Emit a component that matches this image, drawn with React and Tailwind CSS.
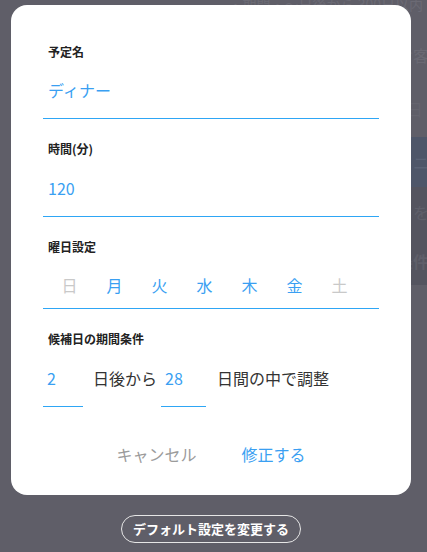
import React from "react";

const days = [
  { d: "日", on: false },
  { d: "月", on: true },
  { d: "火", on: true },
  { d: "水", on: true },
  { d: "木", on: true },
  { d: "金", on: true },
  { d: "土", on: false },
];

const font = { fontFamily: '"Noto Sans CJK JP", "Noto Sans", sans-serif' };

const Label = ({ children, className = "" }) => (
  <div className={"h-4 pl-[5px] text-[12px] font-bold leading-4 text-[#222] " + className}>{children}</div>
);

const App = () => {
  return (
    <div style={font} className="relative h-[552px] w-[427px] overflow-hidden bg-[#5f5e68]">
      {/* dimmed page behind the modal */}
      <div className="flex flex-col items-end">
        <div className="h-[30px] pr-1 text-[14px] leading-[8px] text-[#6b6a74]">
          ・期間・〜日後から 300日以内
        </div>
        <div className="flex h-[50px] w-[30px] items-center text-[16px] text-[#6a6973]">
          <span className="whitespace-nowrap">お客</span>
        </div>
        <div className="flex h-[57px] w-[30px] items-center text-[16px] text-[#65646e]">
          <span className="-ml-2 whitespace-nowrap">10日</span>
        </div>
        <div className="flex h-[50px] w-[30px] items-center bg-[#4e5669] text-[16px] text-[#5a6275]">
          <span className="whitespace-nowrap">ミニ</span>
        </div>
        <div className="flex h-[50px] w-[30px] items-center bg-[#54545f] text-[16px] text-[#5f5f6a]">
          <span className="whitespace-nowrap">日を</span>
        </div>
        <div className="flex h-[48px] w-[30px] items-center bg-[#54545f] text-[16px] font-bold text-[#5f5f6a]">
          <span className="whitespace-nowrap">条件</span>
        </div>
      </div>

      {/* modal */}
      <div className="absolute inset-0 flex flex-col items-start pl-[11px] pt-[5px]">
        <div className="flex h-[490px] w-[400px] flex-col rounded-[16px] bg-white px-[32px] pt-[39px]">
          <Label>予定名</Label>
          <div className="border-b border-[#2ea6f5] pb-[16px] pl-[5px] pt-[18px] text-[16px] leading-6 text-[#3a9ff2]">
            ディナー
          </div>

          <Label className="mt-[22px]">時間(分)</Label>
          <div className="border-b border-[#2ea6f5] pb-[16px] pl-[5px] pt-[19px] text-[16px] leading-6 text-[#3a9ff2]">
            120
          </div>

          <Label className="mt-[22px]">曜日設定</Label>
          <div className="flex border-b border-[#2ea6f5] pb-[11px] pl-[4px] pt-[18px] text-[16px] leading-6">
            {days.map((x) => (
              <div
                key={x.d}
                className={"w-[45px] text-center " + (x.on ? "text-[#3a9ff2]" : "text-[#c9c9c9]")}
              >
                {x.d}
              </div>
            ))}
          </div>

          <Label className="mt-[22px]">候補日の期間条件</Label>
          <div className="flex items-start text-[16px] leading-6">
            <div className="w-[40px] border-b border-[#2ea6f5] pb-[16px] pl-[4px] pt-[19px] text-[#3a9ff2]">2</div>
            <div className="ml-[10px] pt-[19px] text-[#333]">日後から</div>
            <div className="ml-[4px] w-[45px] border-b border-[#2ea6f5] pb-[16px] pl-[4px] pt-[19px] text-[#3a9ff2]">28</div>
            <div className="ml-[11px] pt-[19px] text-[#333]">日間の中で調整</div>
          </div>

          <div className="mt-[35px] flex justify-center gap-[45px] text-[16px] leading-6">
            <button className="text-[#9b9b9b]">キャンセル</button>
            <button className="text-[#3a9ff2]">修正する</button>
          </div>
        </div>

        <button className="ml-[110px] mt-[20px] flex h-[28px] w-[180px] items-center justify-center rounded-full border border-[#e6e6e6] text-[13px] font-bold text-white">
          デフォルト設定を変更する
        </button>
      </div>
    </div>
  );
};

export default App;
